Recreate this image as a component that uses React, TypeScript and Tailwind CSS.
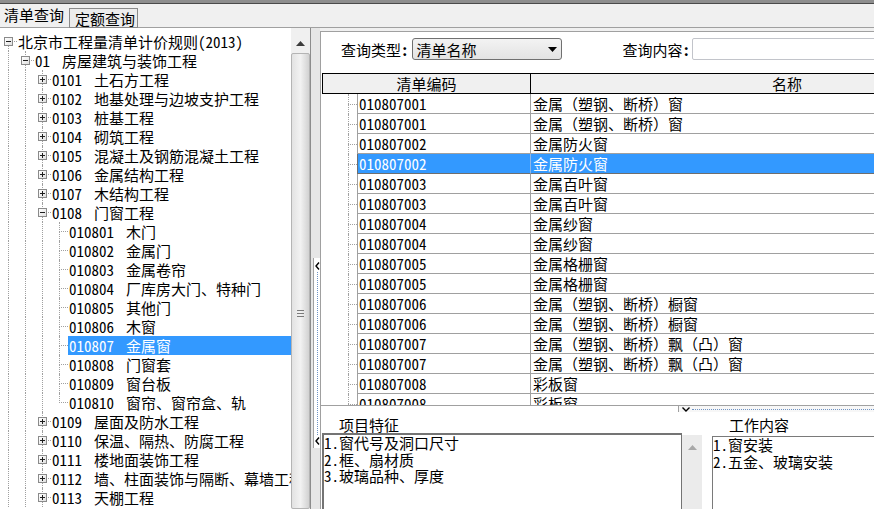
import React from 'react';

type TreeItem = {
  level: number;
  code?: string;
  name: string;
  kind: 'minus' | 'plus' | 'leaf';
  last?: boolean;
  selected?: boolean;
  half?: boolean;
};

const tree: TreeItem[] = [
  { level: 0, name: '北京市工程量清单计价规则(2013)', kind: 'minus', half: true },
  { level: 1, code: '01', name: '房屋建筑与装饰工程', kind: 'minus' },
  { level: 2, code: '0101', name: '土石方工程', kind: 'plus' },
  { level: 2, code: '0102', name: '地基处理与边坡支护工程', kind: 'plus' },
  { level: 2, code: '0103', name: '桩基工程', kind: 'plus' },
  { level: 2, code: '0104', name: '砌筑工程', kind: 'plus' },
  { level: 2, code: '0105', name: '混凝土及钢筋混凝土工程', kind: 'plus' },
  { level: 2, code: '0106', name: '金属结构工程', kind: 'plus' },
  { level: 2, code: '0107', name: '木结构工程', kind: 'plus' },
  { level: 2, code: '0108', name: '门窗工程', kind: 'minus' },
  { level: 3, code: '010801', name: '木门', kind: 'leaf' },
  { level: 3, code: '010802', name: '金属门', kind: 'leaf' },
  { level: 3, code: '010803', name: '金属卷帘', kind: 'leaf' },
  { level: 3, code: '010804', name: '厂库房大门、特种门', kind: 'leaf' },
  { level: 3, code: '010805', name: '其他门', kind: 'leaf' },
  { level: 3, code: '010806', name: '木窗', kind: 'leaf' },
  { level: 3, code: '010807', name: '金属窗', kind: 'leaf', selected: true },
  { level: 3, code: '010808', name: '门窗套', kind: 'leaf' },
  { level: 3, code: '010809', name: '窗台板', kind: 'leaf' },
  { level: 3, code: '010810', name: '窗帘、窗帘盒、轨', kind: 'leaf', last: true },
  { level: 2, code: '0109', name: '屋面及防水工程', kind: 'plus' },
  { level: 2, code: '0110', name: '保温、隔热、防腐工程', kind: 'plus' },
  { level: 2, code: '0111', name: '楼地面装饰工程', kind: 'plus' },
  { level: 2, code: '0112', name: '墙、柱面装饰与隔断、幕墙工程', kind: 'plus' },
  { level: 2, code: '0113', name: '天棚工程', kind: 'plus' },
];

const rows: [string, string][] = [
  ['010807001', '金属（塑钢、断桥）窗'],
  ['010807001', '金属（塑钢、断桥）窗'],
  ['010807002', '金属防火窗'],
  ['010807002', '金属防火窗'],
  ['010807003', '金属百叶窗'],
  ['010807003', '金属百叶窗'],
  ['010807004', '金属纱窗'],
  ['010807004', '金属纱窗'],
  ['010807005', '金属格栅窗'],
  ['010807005', '金属格栅窗'],
  ['010807006', '金属（塑钢、断桥）橱窗'],
  ['010807006', '金属（塑钢、断桥）橱窗'],
  ['010807007', '金属（塑钢、断桥）飘（凸）窗'],
  ['010807007', '金属（塑钢、断桥）飘（凸）窗'],
  ['010807008', '彩板窗'],
  ['010807008', '彩板窗'],
];

const lineX = ['left-[8px]', 'left-[25px]', 'left-[42px]', 'left-[59px]'];
const boxX = ['left-[4px]', 'left-[21px]', 'left-[38px]', 'left-[55px]'];
const textPad = ['pl-[17px]', 'pl-[34px]', 'pl-[51px]', 'pl-[68px]'];

const dot = 'absolute border-[#a0a0a0] border-dotted';
const half = "[font-feature-settings:'hwid']";

function ExpandBox({ open, x }: { open: boolean; x: string }) {
  return (
    <span className={`absolute top-[5px] h-[9px] w-[9px] border border-[#8a8a8a] bg-linear-to-br from-white to-[#e0e0e0] ${x}`}>
      <span className="absolute left-[1px] top-[3px] h-px w-[5px] bg-[#1e1e1e]" />
      {!open && <span className="absolute left-[3px] top-[1px] h-[5px] w-px bg-[#1e1e1e]" />}
    </span>
  );
}

function TreeRow({ item }: { item: TreeItem }) {
  const cols = [0, 1, 2, 3].slice(0, item.level);
  return (
    <div className={`relative flex h-[19px] items-center whitespace-nowrap ${textPad[item.level]}`}>
      {cols.map((c) => (
        <span key={c} className={`${dot} top-0 bottom-0 border-l ${lineX[c]}`} />
      ))}
      {item.level > 0 && <span className={`${dot} top-0 h-[10px] border-l ${lineX[item.level]}`} />}
      {!item.last && <span className={`${dot} top-[9px] bottom-0 border-l ${lineX[item.level]}`} />}
      <span className={`${dot} top-[9px] h-0 w-[9px] border-t ${lineX[item.level]}`} />
      {item.kind !== 'leaf' && <ExpandBox open={item.kind === 'minus'} x={boxX[item.level]} />}
      <span
        className={`relative flex h-full items-center pl-px pr-1 ${
          item.selected ? 'flex-1 bg-[#3399ff] text-white' : ''
        }`}
      >
        {item.code && <span className={`mr-[12px] ${half}`}>{item.code}</span>}
        <span className={item.half ? half : ''}>{item.name}</span>
      </span>
    </div>
  );
}

function TableRow({ code, name, selected }: { code: string; name: string; selected?: boolean }) {
  return (
    <div className="relative flex h-[20px] shrink-0 whitespace-nowrap">
      <div className="relative w-[36px] shrink-0">
        <span className={`${dot} left-[27px] top-0 bottom-0 border-l`} />
        <span className={`${dot} left-[27px] top-[10px] h-0 w-[9px] border-t`} />
      </div>
      <div
        className={`flex w-[173px] shrink-0 items-center border-b border-l pl-px ${half} ${
          selected ? 'border-[#6e6e6e] bg-[#3399ff] text-white' : 'border-[#a0a0a0]'
        }`}
      >
        {code}
      </div>
      <div
        className={`flex w-[520px] shrink-0 items-center border-b border-l pl-[2px] ${
          selected ? 'border-[#6e6e6e] border-l-[#8fb8e8] bg-[#3399ff] text-white' : 'border-[#a0a0a0]'
        }`}
      >
        {name}
      </div>
    </div>
  );
}

function ChevronLeft() {
  return (
    <svg width="5" height="8" viewBox="0 0 5 8" className="block shrink-0">
      <polyline points="4,0.5 1,4 4,7.5" fill="none" stroke="#000" strokeWidth="1.4" />
    </svg>
  );
}

export default function App() {
  return (
    <div className="flex h-[509px] w-[874px] flex-col overflow-hidden bg-[#f0f0f0] text-[15px] leading-[19px] text-black font-['Noto_Sans_CJK_SC',sans-serif]">
      {/* window frame top */}
      <div className="h-[3px] shrink-0 bg-[#8e8e8e]" />
      <div className="h-px shrink-0 bg-[#4a4a4a]" />

      {/* tabs */}
      <div className="flex h-[24px] shrink-0 items-end border-b border-[#a0a0a0]">
        <div className="flex h-[23px] w-[69px] items-center pl-[4px] pb-[2px]">清单查询</div>
        <div className="mb-[-1px] flex h-[20px] w-[69px] items-center border border-[#8a8a8a] bg-[#ececec] pl-[5px] pt-[1px]">
          定额查询
        </div>
      </div>

      <div className="flex min-h-0 flex-1">
        {/* tree */}
        <div className="w-[291px] shrink-0 overflow-hidden bg-white pt-[4px]">
          {tree.map((item, i) => (
            <TreeRow key={i} item={item} />
          ))}
        </div>

        {/* tree scrollbar */}
        <div className="flex w-[20px] shrink-0 flex-col border-r border-[#8c8c8c] bg-[#f0f0f0]">
          <div className="flex h-[25px] shrink-0 items-center justify-center pt-[5px]">
            <svg width="9" height="5" viewBox="0 0 9 5">
              <polygon points="0,5 4.5,0 9,5" fill="#3c3c3c" />
            </svg>
          </div>
          <div className="flex flex-1 flex-col items-center rounded-[2px] border border-[#b4b4b4] bg-linear-to-r from-[#e2e2e2] via-[#f2f2f2] to-[#d2d2d2] pt-[256px]">
            <div className="flex w-[7px] flex-col gap-[2px]">
              <span className="h-px bg-[#7a7a7a]" />
              <span className="h-px bg-[#7a7a7a]" />
              <span className="h-px bg-[#7a7a7a]" />
            </div>
          </div>
        </div>

        {/* vertical splitter */}
        <div className="flex w-[9px] shrink-0 flex-col bg-[#e6e6e6]">
          <div className="h-[230px] shrink-0" />
          <div className="ml-[2px] flex h-[190px] shrink-0 flex-col items-center border-l border-[#a0a0a0] bg-white pt-[4px] pb-[3px]">
            <ChevronLeft />
            <span className="my-[2px] flex-1 border-l border-dotted border-[#6f93c4]" />
            <ChevronLeft />
          </div>
        </div>

        {/* right panel */}
        <div className="flex min-w-0 flex-1 flex-col pt-[3px]">
          <div className="flex min-h-0 flex-1 flex-col border-l border-t border-[#a0a0a0] bg-white">
            {/* query bar */}
            <div className="flex h-[41px] shrink-0 items-start pl-[20px] pt-[6px] whitespace-nowrap">
              <div className="flex h-[22px] items-center">
                查询类型<span className={`${half} font-bold`}>:</span>
                <div className="ml-[3px] flex h-[22px] w-[150px] items-center justify-between rounded-[3px] border border-[#707070] bg-linear-to-b from-[#f3f3f3] to-[#e3e3e3] pl-[4px] pr-[4px]">
                  <span>清单名称</span>
                  <svg width="9" height="5" viewBox="0 0 9 5">
                    <polygon points="0,0 9,0 4.5,5" fill="#000" />
                  </svg>
                </div>
                <span className="ml-[61px]">查询内容</span>
                <span className={`${half} font-bold`}>:</span>
                <div className="ml-[2px] h-[22px] w-[200px] rounded-[2px] border border-[#c2c4ca] bg-white" />
              </div>
            </div>

            {/* grid */}
            <div className="flex h-[332px] shrink-0 flex-col overflow-hidden">
              <div className="ml-px flex h-[21px] w-[730px] shrink-0 border border-black bg-[#f0f0f0] leading-[18px]">
                <div className="flex w-[207px] items-center justify-center">清单编码</div>
                <div className="flex w-[513px] items-center justify-center border-l border-black">名称</div>
              </div>
              {rows.map(([code, name], i) => (
                <TableRow key={i} code={code} name={name} selected={i === 3} />
              ))}
            </div>

            {/* horizontal splitter */}
            <div className="flex h-[7px] shrink-0">
              <div className="w-[357px] shrink-0 border-t border-[#a0a0a0]" />
              <div className="flex flex-1 items-center gap-[2px] border-l border-t border-[#a0a0a0] bg-[#f7f7f7] pl-[3px]">
                <svg width="8" height="5" viewBox="0 0 8 5" className="block">
                  <polyline points="0.5,0.5 4,4 7.5,0.5" fill="none" stroke="#000" strokeWidth="1.4" />
                </svg>
                <span className="flex-1 border-t border-dotted border-[#6f93c4]" />
              </div>
            </div>

            {/* bottom detail */}
            <div className="flex min-h-0 flex-1 whitespace-nowrap">
              <div className="ml-px flex w-[380px] shrink-0 flex-col">
                <div className="h-[21px] shrink-0 pl-[17px] pt-[4px] leading-[17px]">项目特征</div>
                <div className="flex flex-1">
                  <div className="flex-1 border-l-2 border-t-2 border-r border-[#747474] leading-[16.5px]">
                    <div>
                      <span className={half}>1.</span>窗代号及洞口尺寸
                    </div>
                    <div>
                      <span className={half}>2.</span>框、扇材质
                    </div>
                    <div>
                      <span className={half}>3.</span>玻璃品种、厚度
                    </div>
                  </div>
                  <div className="mt-[2px] flex w-[20px] shrink-0 justify-center bg-[#ebebeb] pt-[10px]">
                    <svg width="9" height="5" viewBox="0 0 9 5">
                      <polygon points="0,5 4.5,0 9,5" fill="#a8a8a8" />
                    </svg>
                  </div>
                </div>
              </div>
              <div className="ml-[10px] flex flex-1 flex-col">
                <div className="h-[24px] shrink-0 pl-[17px] pt-[4px] leading-[17px]">工作内容</div>
                <div className="flex-1 border-l border-t border-[#7a7a7a] leading-[16.5px]">
                  <div>
                    <span className={half}>1.</span>窗安装
                  </div>
                  <div>
                    <span className={half}>2.</span>五金、玻璃安装
                  </div>
                </div>
              </div>
            </div>
          </div>
        </div>
      </div>
    </div>
  );
}
